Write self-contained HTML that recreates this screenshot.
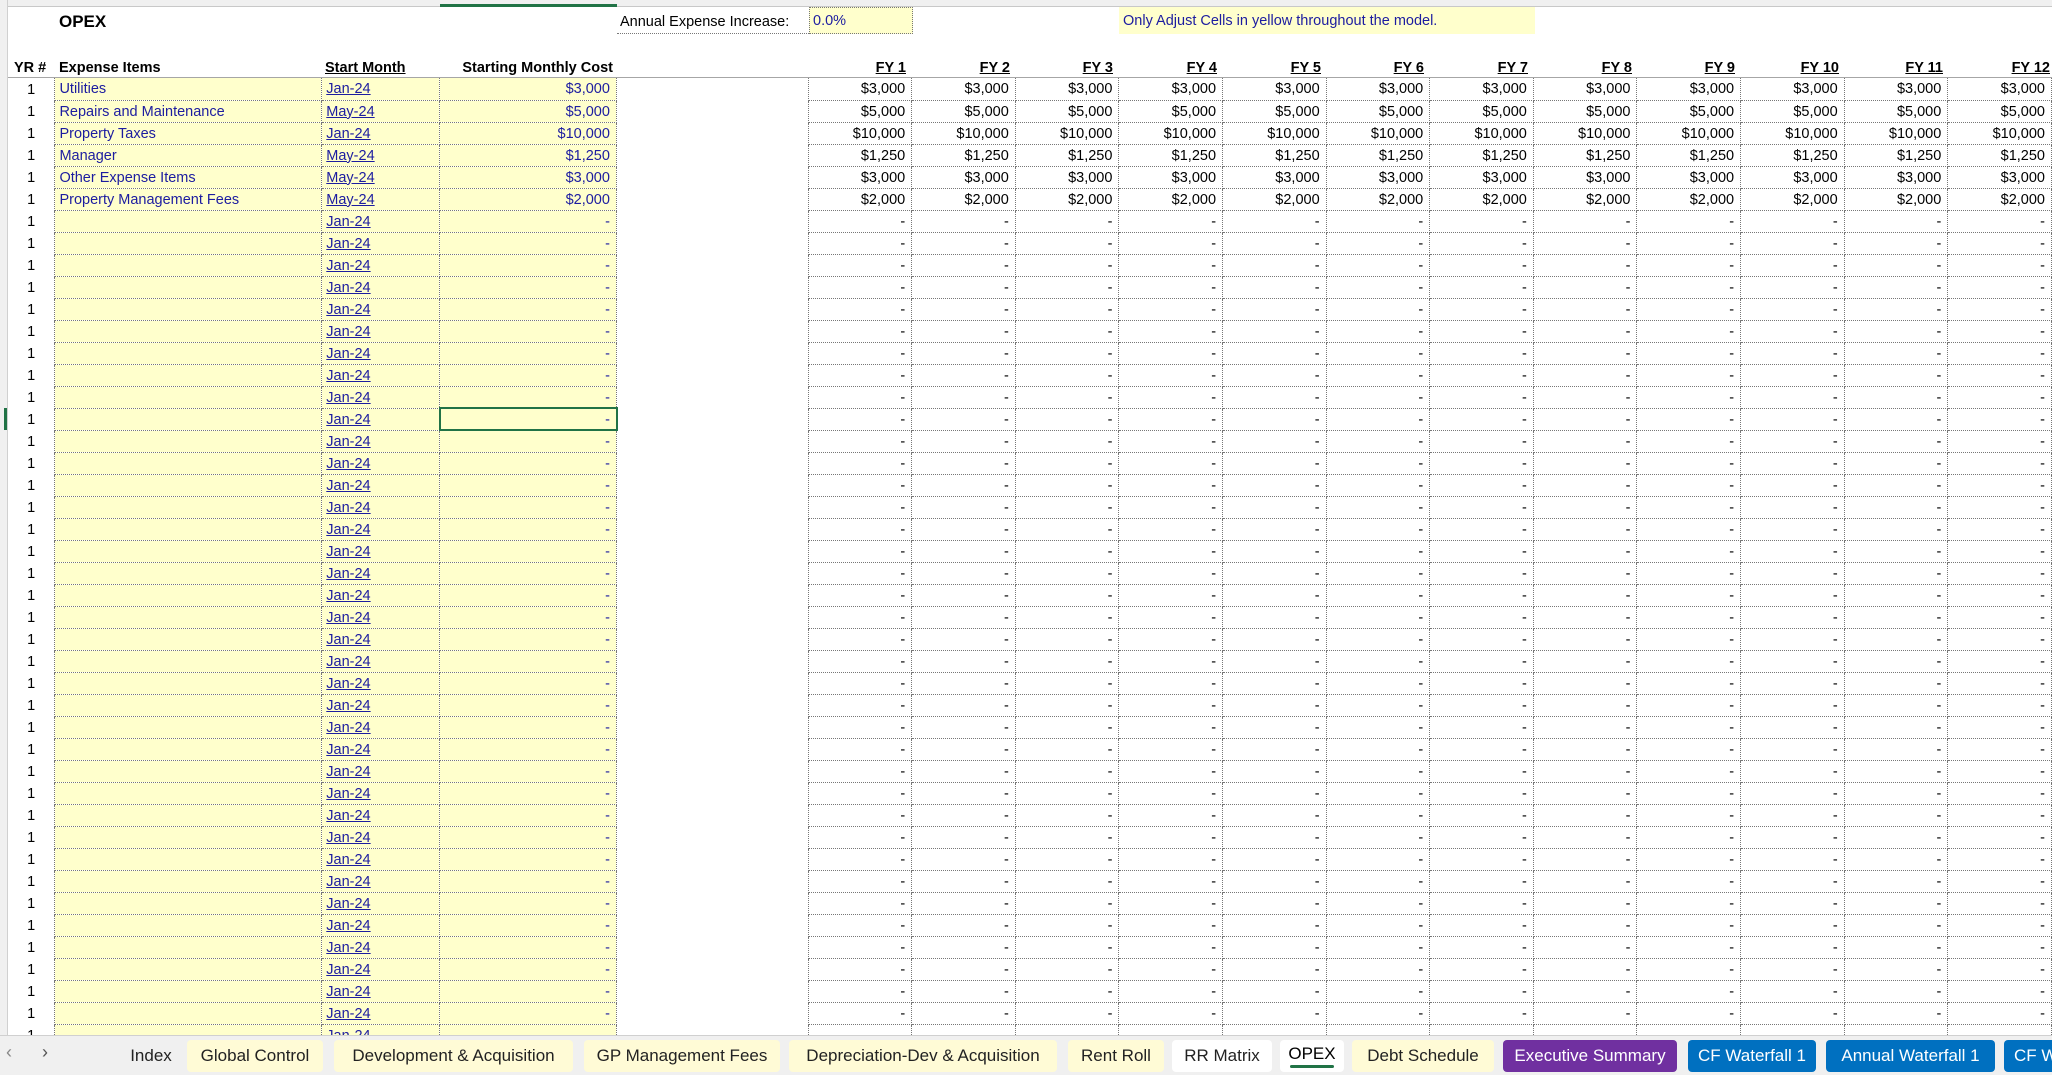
<!DOCTYPE html>
<html><head><meta charset="utf-8"><style>
*{margin:0;padding:0;box-sizing:border-box}
body{width:2052px;height:1075px;overflow:hidden;background:#fff;font-family:"Liberation Sans",Arial,sans-serif;font-size:14.5px;color:#000;position:relative}
#top{position:absolute;left:0;top:0;width:2052px;height:7px;background:#f0f0f0;border-bottom:1px solid #c8c8c8}
#topsel{position:absolute;left:440px;top:4px;width:177px;height:3px;background:#217346}
#left{position:absolute;left:0;top:0;width:8px;height:1035px;background:#f0f0f0;border-right:1px solid #d0d0d0}
#leftsel{position:absolute;left:4px;top:408px;width:3px;height:22px;background:#217346}
#grid{position:absolute;left:8px;top:78px;width:2044px;height:957px;overflow:hidden}
table{border-collapse:collapse;table-layout:fixed}
td{height:22px;padding:1px 4px 0;white-space:nowrap;overflow:hidden;line-height:20px}
td:nth-child(1){text-align:center}
td:nth-child(2),td:nth-child(3),td:nth-child(4){background:#ffffcc;border-right:1px dotted #777;border-bottom:1px dotted #777;color:#1c1ca0}
td:nth-child(2){border-left:1px dotted #777}
td:nth-child(3) u{color:#1c1ca0}
td:nth-child(4){text-align:right;padding-right:6px}
td:nth-child(n+6){text-align:right;border-right:1px dotted #777;border-bottom:1px dotted #777;padding-right:6px}
td:nth-child(6){border-left:1px dotted #777}
.abs{position:absolute;white-space:nowrap}
.hd{font-weight:bold;top:58px;height:20px;line-height:20px}
#hline{position:absolute;left:8px;top:77px;width:2044px;height:1px;background:#a6a6a6}
#sel{position:absolute;left:439px;top:407px;width:179px;height:24px;border:2px solid #217346}
#tabs{position:absolute;left:0;top:1035px;width:2052px;height:40px;background:#f0f0f0;border-top:1px solid #d0d0d0}
.t{position:absolute;top:4px;height:32px;line-height:32px;font-size:17px;text-align:center;border-radius:4px;background:#fffbd6;color:#222}
</style></head><body>
<div id="top"></div><div id="topsel"></div>
<div id="left"></div><div id="leftsel"></div>
<div class="abs" style="left:59px;top:12px;font-weight:bold;font-size:17px">OPEX</div>
<div class="abs" style="left:617px;top:9px;width:192px;height:25px;border-bottom:1px dotted #777;padding-left:3px;line-height:27px">Annual Expense Increase:</div>
<div class="abs" style="left:809px;top:7px;width:104px;height:27px;background:#ffffcc;border:1px dotted #777;color:#1c1ca0;padding-left:3px;line-height:27px">0.0%</div>
<div class="abs" style="left:1119px;top:7px;width:416px;height:27px;background:#ffffcc;color:#1c1ca0;padding-left:4px;line-height:28px">Only Adjust Cells in yellow throughout the model.</div>
<div class="abs hd" style="left:14px">YR #</div>
<div class="abs hd" style="left:59px">Expense Items</div>
<div class="abs hd" style="left:325px"><u>Start Month</u></div>
<div class="abs hd" style="left:440px;width:173px;text-align:right">Starting Monthly Cost</div>
<div class="abs hd" style="left:809px;width:1243px;overflow:hidden;height:20px">
<span style="position:absolute;right:1146px"><u>FY 1</u></span>
<span style="position:absolute;right:1042px"><u>FY 2</u></span>
<span style="position:absolute;right:939px"><u>FY 3</u></span>
<span style="position:absolute;right:835px"><u>FY 4</u></span>
<span style="position:absolute;right:731px"><u>FY 5</u></span>
<span style="position:absolute;right:628px"><u>FY 6</u></span>
<span style="position:absolute;right:524px"><u>FY 7</u></span>
<span style="position:absolute;right:420px"><u>FY 8</u></span>
<span style="position:absolute;right:317px"><u>FY 9</u></span>
<span style="position:absolute;right:213px"><u>FY 10</u></span>
<span style="position:absolute;right:109px"><u>FY 11</u></span>
<span style="position:absolute;right:2px"><u>FY 12</u></span>
</div>
<div id="hline"></div>
<div id="grid">
<table>
<colgroup><col style="width:47px"><col style="width:267px"><col style="width:118px"><col style="width:177px"><col style="width:192px"><col span="12" style="width:103.7px"></colgroup>
<tr><td>1<td>Utilities<td><u>Jan-24</u><td>$3,000<td><td>$3,000<td>$3,000<td>$3,000<td>$3,000<td>$3,000<td>$3,000<td>$3,000<td>$3,000<td>$3,000<td>$3,000<td>$3,000<td>$3,000
<tr><td>1<td>Repairs and Maintenance<td><u>May-24</u><td>$5,000<td><td>$5,000<td>$5,000<td>$5,000<td>$5,000<td>$5,000<td>$5,000<td>$5,000<td>$5,000<td>$5,000<td>$5,000<td>$5,000<td>$5,000
<tr><td>1<td>Property Taxes<td><u>Jan-24</u><td>$10,000<td><td>$10,000<td>$10,000<td>$10,000<td>$10,000<td>$10,000<td>$10,000<td>$10,000<td>$10,000<td>$10,000<td>$10,000<td>$10,000<td>$10,000
<tr><td>1<td>Manager<td><u>May-24</u><td>$1,250<td><td>$1,250<td>$1,250<td>$1,250<td>$1,250<td>$1,250<td>$1,250<td>$1,250<td>$1,250<td>$1,250<td>$1,250<td>$1,250<td>$1,250
<tr><td>1<td>Other Expense Items<td><u>May-24</u><td>$3,000<td><td>$3,000<td>$3,000<td>$3,000<td>$3,000<td>$3,000<td>$3,000<td>$3,000<td>$3,000<td>$3,000<td>$3,000<td>$3,000<td>$3,000
<tr><td>1<td>Property Management Fees<td><u>May-24</u><td>$2,000<td><td>$2,000<td>$2,000<td>$2,000<td>$2,000<td>$2,000<td>$2,000<td>$2,000<td>$2,000<td>$2,000<td>$2,000<td>$2,000<td>$2,000
<tr><td>1<td><td><u>Jan-24</u><td>-<td><td>-<td>-<td>-<td>-<td>-<td>-<td>-<td>-<td>-<td>-<td>-<td>-
<tr><td>1<td><td><u>Jan-24</u><td>-<td><td>-<td>-<td>-<td>-<td>-<td>-<td>-<td>-<td>-<td>-<td>-<td>-
<tr><td>1<td><td><u>Jan-24</u><td>-<td><td>-<td>-<td>-<td>-<td>-<td>-<td>-<td>-<td>-<td>-<td>-<td>-
<tr><td>1<td><td><u>Jan-24</u><td>-<td><td>-<td>-<td>-<td>-<td>-<td>-<td>-<td>-<td>-<td>-<td>-<td>-
<tr><td>1<td><td><u>Jan-24</u><td>-<td><td>-<td>-<td>-<td>-<td>-<td>-<td>-<td>-<td>-<td>-<td>-<td>-
<tr><td>1<td><td><u>Jan-24</u><td>-<td><td>-<td>-<td>-<td>-<td>-<td>-<td>-<td>-<td>-<td>-<td>-<td>-
<tr><td>1<td><td><u>Jan-24</u><td>-<td><td>-<td>-<td>-<td>-<td>-<td>-<td>-<td>-<td>-<td>-<td>-<td>-
<tr><td>1<td><td><u>Jan-24</u><td>-<td><td>-<td>-<td>-<td>-<td>-<td>-<td>-<td>-<td>-<td>-<td>-<td>-
<tr><td>1<td><td><u>Jan-24</u><td>-<td><td>-<td>-<td>-<td>-<td>-<td>-<td>-<td>-<td>-<td>-<td>-<td>-
<tr><td>1<td><td><u>Jan-24</u><td>-<td><td>-<td>-<td>-<td>-<td>-<td>-<td>-<td>-<td>-<td>-<td>-<td>-
<tr><td>1<td><td><u>Jan-24</u><td>-<td><td>-<td>-<td>-<td>-<td>-<td>-<td>-<td>-<td>-<td>-<td>-<td>-
<tr><td>1<td><td><u>Jan-24</u><td>-<td><td>-<td>-<td>-<td>-<td>-<td>-<td>-<td>-<td>-<td>-<td>-<td>-
<tr><td>1<td><td><u>Jan-24</u><td>-<td><td>-<td>-<td>-<td>-<td>-<td>-<td>-<td>-<td>-<td>-<td>-<td>-
<tr><td>1<td><td><u>Jan-24</u><td>-<td><td>-<td>-<td>-<td>-<td>-<td>-<td>-<td>-<td>-<td>-<td>-<td>-
<tr><td>1<td><td><u>Jan-24</u><td>-<td><td>-<td>-<td>-<td>-<td>-<td>-<td>-<td>-<td>-<td>-<td>-<td>-
<tr><td>1<td><td><u>Jan-24</u><td>-<td><td>-<td>-<td>-<td>-<td>-<td>-<td>-<td>-<td>-<td>-<td>-<td>-
<tr><td>1<td><td><u>Jan-24</u><td>-<td><td>-<td>-<td>-<td>-<td>-<td>-<td>-<td>-<td>-<td>-<td>-<td>-
<tr><td>1<td><td><u>Jan-24</u><td>-<td><td>-<td>-<td>-<td>-<td>-<td>-<td>-<td>-<td>-<td>-<td>-<td>-
<tr><td>1<td><td><u>Jan-24</u><td>-<td><td>-<td>-<td>-<td>-<td>-<td>-<td>-<td>-<td>-<td>-<td>-<td>-
<tr><td>1<td><td><u>Jan-24</u><td>-<td><td>-<td>-<td>-<td>-<td>-<td>-<td>-<td>-<td>-<td>-<td>-<td>-
<tr><td>1<td><td><u>Jan-24</u><td>-<td><td>-<td>-<td>-<td>-<td>-<td>-<td>-<td>-<td>-<td>-<td>-<td>-
<tr><td>1<td><td><u>Jan-24</u><td>-<td><td>-<td>-<td>-<td>-<td>-<td>-<td>-<td>-<td>-<td>-<td>-<td>-
<tr><td>1<td><td><u>Jan-24</u><td>-<td><td>-<td>-<td>-<td>-<td>-<td>-<td>-<td>-<td>-<td>-<td>-<td>-
<tr><td>1<td><td><u>Jan-24</u><td>-<td><td>-<td>-<td>-<td>-<td>-<td>-<td>-<td>-<td>-<td>-<td>-<td>-
<tr><td>1<td><td><u>Jan-24</u><td>-<td><td>-<td>-<td>-<td>-<td>-<td>-<td>-<td>-<td>-<td>-<td>-<td>-
<tr><td>1<td><td><u>Jan-24</u><td>-<td><td>-<td>-<td>-<td>-<td>-<td>-<td>-<td>-<td>-<td>-<td>-<td>-
<tr><td>1<td><td><u>Jan-24</u><td>-<td><td>-<td>-<td>-<td>-<td>-<td>-<td>-<td>-<td>-<td>-<td>-<td>-
<tr><td>1<td><td><u>Jan-24</u><td>-<td><td>-<td>-<td>-<td>-<td>-<td>-<td>-<td>-<td>-<td>-<td>-<td>-
<tr><td>1<td><td><u>Jan-24</u><td>-<td><td>-<td>-<td>-<td>-<td>-<td>-<td>-<td>-<td>-<td>-<td>-<td>-
<tr><td>1<td><td><u>Jan-24</u><td>-<td><td>-<td>-<td>-<td>-<td>-<td>-<td>-<td>-<td>-<td>-<td>-<td>-
<tr><td>1<td><td><u>Jan-24</u><td>-<td><td>-<td>-<td>-<td>-<td>-<td>-<td>-<td>-<td>-<td>-<td>-<td>-
<tr><td>1<td><td><u>Jan-24</u><td>-<td><td>-<td>-<td>-<td>-<td>-<td>-<td>-<td>-<td>-<td>-<td>-<td>-
<tr><td>1<td><td><u>Jan-24</u><td>-<td><td>-<td>-<td>-<td>-<td>-<td>-<td>-<td>-<td>-<td>-<td>-<td>-
<tr><td>1<td><td><u>Jan-24</u><td>-<td><td>-<td>-<td>-<td>-<td>-<td>-<td>-<td>-<td>-<td>-<td>-<td>-
<tr><td>1<td><td><u>Jan-24</u><td>-<td><td>-<td>-<td>-<td>-<td>-<td>-<td>-<td>-<td>-<td>-<td>-<td>-
<tr><td>1<td><td><u>Jan-24</u><td>-<td><td>-<td>-<td>-<td>-<td>-<td>-<td>-<td>-<td>-<td>-<td>-<td>-
<tr><td>1<td><td><u>Jan-24</u><td>-<td><td>-<td>-<td>-<td>-<td>-<td>-<td>-<td>-<td>-<td>-<td>-<td>-
<tr><td>1<td><td><u>Jan-24</u><td>-<td><td>-<td>-<td>-<td>-<td>-<td>-<td>-<td>-<td>-<td>-<td>-<td>-
</table>
</div>
<div id="sel"></div>
<div id="tabs">
<span class="abs" style="left:6px;top:6px;font-size:18px;color:#888">&#8249;</span>
<span class="abs" style="left:42px;top:6px;font-size:18px;color:#555">&#8250;</span>
<div class="t" style="left:118px;width:66px;background:transparent">Index</div>
<div class="t" style="left:187px;width:136px">Global Control</div>
<div class="t" style="left:334px;width:239px">Development &amp; Acquisition</div>
<div class="t" style="left:584px;width:196px">GP Management Fees</div>
<div class="t" style="left:789px;width:268px">Depreciation-Dev &amp; Acquisition</div>
<div class="t" style="left:1068px;width:96px">Rent Roll</div>
<div class="t" style="left:1172px;width:100px;background:#fff">RR Matrix</div>
<div class="t" style="left:1280px;width:64px;background:#fff;font-weight:normal;color:#000;line-height:28px">OPEX<div style="position:absolute;left:10px;right:10px;bottom:4px;height:3px;background:#217346;border-radius:2px"></div></div>
<div class="t" style="left:1352px;width:142px">Debt Schedule</div>
<div class="t" style="left:1503px;width:174px;background:#7030a0;color:#fff">Executive Summary</div>
<div class="t" style="left:1688px;width:128px;background:#0070c0;color:#fff">CF Waterfall 1</div>
<div class="t" style="left:1826px;width:169px;background:#0070c0;color:#fff">Annual Waterfall 1</div>
<div class="t" style="left:2004px;width:120px;background:#0070c0;color:#fff;text-align:left;padding-left:10px">CF Waterfall 2</div>
</div>
</body></html>
